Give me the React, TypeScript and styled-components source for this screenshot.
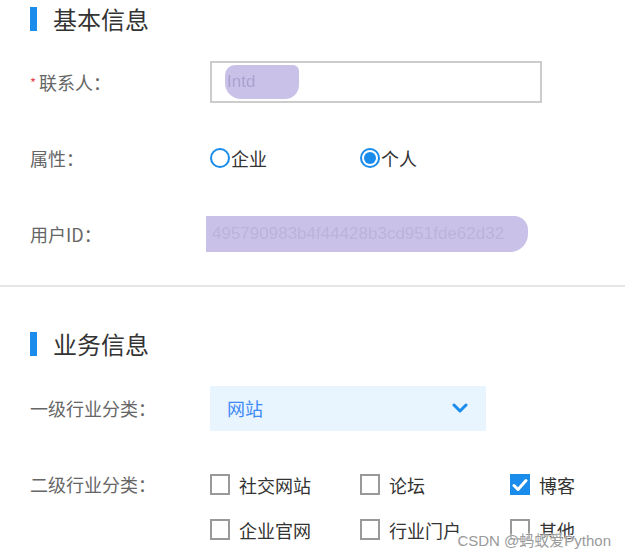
import React from "react";
import styled, { createGlobalStyle } from "styled-components";

const Global = createGlobalStyle`
  html, body { margin: 0; padding: 0; background: #fff; }
  body { font-family: "Noto Sans CJK SC", "Noto Sans", sans-serif; }
  * { box-sizing: border-box; }
`;

const Page = styled.div`
  position: relative;
  width: 625px;
  min-height: 557px;
  overflow: hidden;
  background: #fff;
`;

const Section = styled.section<{ $top: number }>`
  padding: ${(p) => p.$top}px 30px 0 30px;
`;

const Heading = styled.h2`
  margin: 0;
  display: flex;
  align-items: center;
  height: 24px;
  font-size: 24px;
  font-weight: 400;
  color: #333;
  line-height: 24px;
  &::before {
    content: "";
    display: block;
    width: 7px;
    height: 24px;
    background: #1a8cec;
    margin-right: 16px;
  }
`;

const Rows = styled.div<{ $gap: number }>`
  margin-top: ${(p) => p.$gap}px;
`;

const Row = styled.div<{ $h: number; $align?: string; $pt?: number }>`
  display: flex;
  align-items: ${(p) => p.$align || "center"};
  height: ${(p) => p.$h}px;
  padding-top: ${(p) => p.$pt || 0}px;
`;

const Label = styled.div<{ $lh?: number }>`
  width: 180px;
  flex: none;
  font-size: 18px;
  color: #666;
  line-height: ${(p) => p.$lh || 24}px;
  white-space: nowrap;
`;

const Star = styled.span`
  color: #e5474b;
  font-size: 13px;
  margin-right: 3px;
  vertical-align: 2px;
`;

const InputBox = styled.div`
  width: 332px;
  height: 42px;
  border: 2px solid #cccccc;
  display: flex;
  align-items: center;
  padding-left: 13px;
`;

const Smudge = styled.span<{ $w: number; $h: number }>`
  display: flex;
  align-items: center;
  width: ${(p) => p.$w}px;
  height: ${(p) => p.$h}px;
  background: #c9c1e7;
  border-radius: 10px 6px 14px 16px;
  color: #aaa2cf;
  font-family: "Liberation Sans", Arial, sans-serif;
  font-size: 17px;
  padding-left: 2px;
  overflow: hidden;
  white-space: nowrap;
  filter: blur(0.6px);
`;

const IdSmudge = styled(Smudge)`
  margin-left: -4px;
  border-radius: 0 14px 18px 0;
  color: #bbb3dd;
  font-size: 17px;
  padding-left: 6px;
`;

const OptionGroup = styled.div`
  display: grid;
  grid-template-columns: repeat(3, 150px);
  grid-auto-rows: 45px;
  align-items: center;
`;

const Option = styled.label<{ $gap: number }>`
  display: flex;
  align-items: center;
  gap: ${(p) => p.$gap}px;
  font-size: 18px;
  color: #333;
  line-height: 24px;
  white-space: nowrap;
`;

const Radio = styled.span<{ $on?: boolean }>`
  width: 20px;
  height: 20px;
  border-radius: 50%;
  border: 2px solid #1a8cec;
  display: flex;
  align-items: center;
  justify-content: center;
  flex: none;
  &::after {
    content: "";
    display: ${(p) => (p.$on ? "block" : "none")};
    width: 12px;
    height: 12px;
    border-radius: 50%;
    background: #1a8cec;
  }
`;

const Box = styled.span<{ $on?: boolean }>`
  width: 20px;
  height: 21px;
  flex: none;
  border: ${(p) => (p.$on ? "none" : "2px solid #999")};
  background: ${(p) => (p.$on ? "#1a8cec" : "#fff")};
  display: flex;
  align-items: center;
  justify-content: center;
`;

const Select = styled.div`
  width: 276px;
  height: 45px;
  background: #e8f4fe;
  display: flex;
  align-items: center;
  justify-content: space-between;
  padding: 0 18px 0 17px;
  font-size: 18px;
  color: #3d8af7;
`;

const Divider = styled.hr`
  margin: 13px 0 0;
  border: none;
  height: 2px;
  background: #e6e6e6;
`;

const Watermark = styled.div`
  position: absolute;
  right: 14px;
  bottom: 7px;
  font-family: "Liberation Sans", Arial, "Noto Sans CJK SC", sans-serif;
  font-size: 15px;
  color: #9a9a9a;
  text-shadow: 0 0 2px #fff, 0 0 2px #fff;
`;

const Chevron = () => (
  <svg width="16" height="10" viewBox="0 0 16 10">
    <polyline points="2,2 8,8 14,2" fill="none" stroke="#1a8cec" strokeWidth="3" strokeLinecap="round" strokeLinejoin="round" />
  </svg>
);

const Check = () => (
  <svg width="16" height="14" viewBox="0 0 16 14">
    <polyline points="2,7.5 6,11.5 14,2.5" fill="none" stroke="#fff" strokeWidth="3" strokeLinecap="round" strokeLinejoin="round" />
  </svg>
);

const categories = [
  { t: "社交网站", on: false },
  { t: "论坛", on: false },
  { t: "博客", on: true },
  { t: "企业官网", on: false },
  { t: "行业门户", on: false },
  { t: "其他", on: false },
];

export default function App() {
  return (
    <Page>
      <Global />
      <Section $top={7}>
        <Heading>基本信息</Heading>
        <Rows $gap={13}>
          <Row $h={76}>
            <Label>
              <Star>*</Star>联系人：
            </Label>
            <InputBox>
              <Smudge $w={74} $h={34}>Intd</Smudge>
            </InputBox>
          </Row>
          <Row $h={76}>
            <Label>属性：</Label>
            <OptionGroup>
              <Option $gap={1}>
                <Radio />
                企业
              </Option>
              <Option $gap={1}>
                <Radio $on />
                个人
              </Option>
            </OptionGroup>
          </Row>
          <Row $h={76}>
            <Label>用户ID：</Label>
            <IdSmudge $w={322} $h={36}>495790983b4f44428b3cd951fde62d32</IdSmudge>
          </Row>
        </Rows>
      </Section>
      <Divider />
      <Section $top={45}>
        <Heading>业务信息</Heading>
        <Rows $gap={14}>
          <Row $h={76}>
            <Label>一级行业分类：</Label>
            <Select>
              网站
              <Chevron />
            </Select>
          </Row>
          <Row $h={106} $pt={16} $align="flex-start">
            <Label $lh={45}>二级行业分类：</Label>
            <OptionGroup>
              {categories.map((c) => (
                <Option key={c.t} $gap={9}>
                  <Box $on={c.on}>{c.on && <Check />}</Box>
                  {c.t}
                </Option>
              ))}
            </OptionGroup>
          </Row>
        </Rows>
      </Section>
      <Watermark>CSDN @蚂蚁爱Python</Watermark>
    </Page>
  );
}
